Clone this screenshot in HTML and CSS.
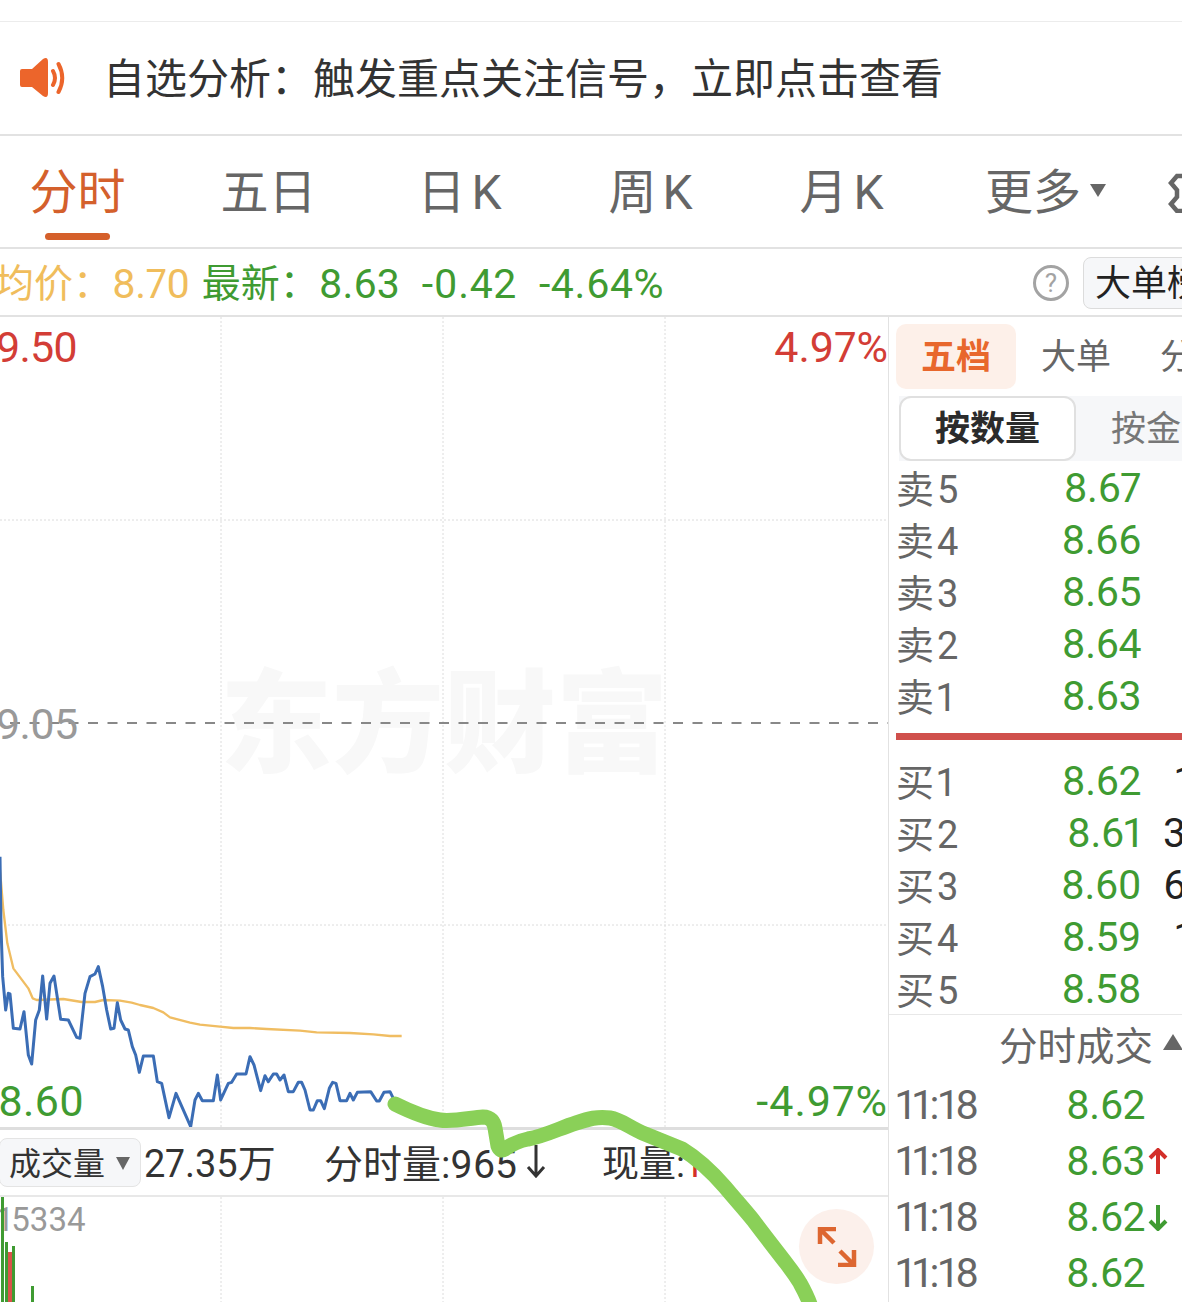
FILE: index.html
```html
<!DOCTYPE html>
<html lang="zh-CN">
<head>
<meta charset="utf-8">
<title>分时</title>
<link rel="stylesheet" href="styles.css">
</head>
<body>
<div class="page">
  <div class="topgap"></div>
  <div class="notice">
    <svg class="speaker" width="48" height="42" viewBox="19 57 48 42"><path class="speaker-body" d="M22 69H32L43 59Q48 56 48 62V93Q48 99 43 96L32 87H22Q20 87 20 85V71Q20 69 22 69Z"/><path class="speaker-wave" d="M53 71Q57 78 53 85M58.500 64Q66 78 58.500 92"/></svg>
    <span class="notice-text">自选分析：触发重点关注信号，立即点击查看</span>
  </div>
  <nav class="tabs">
    <div class="tab active">分时<i class="tab-line"></i></div>
    <div class="tab">五日</div>
    <div class="tab">日 K</div>
    <div class="tab">周 K</div>
    <div class="tab">月 K</div>
    <div class="tab tab-more">更多<i class="caret"></i></div>
    <svg class="tab-tool" width="20" height="40" viewBox="0 0 20 40"><path d="M20 3H9L3 10L9 17V24L3 31L9 38H20"/></svg>
  </nav>
  <div class="info">
    <div class="quote">
      <span class="avg">均价：</span><span class="avg num">8.70</span>
      <span class="latest">最新：</span><span class="latest num">8.63</span>
      <span class="latest num chg">-0.42</span>
      <span class="latest num chg">-4.64%</span>
    </div>
    <div class="help">?</div>
    <div class="big-btn">大单榜</div>
  </div>
  <div class="main">
    <div class="left">
      <div class="chart">
        <svg class="chart-svg" width="888" height="810" viewBox="0 0 888 810">
          <path class="grid" d="M221 0V810M443 0V810M665 0V810M0 203H888M0 608H888"/>
          <path class="mid" d="M10 406H888"/>
          <g transform="translate(0 533) scale(.33333)">
            <polyline class="avg-line" points="0,60 10,180 22,280 40,355 85,415 98,445 110,450 190,447 245,456 285,456 310,450 360,452 395,458 420,465 460,474 490,487 510,502 570,518 600,524 660,530 700,534 750,534 800,537 900,542 950,547 1050,549 1120,553 1170,558 1205,558"/>
            <polyline class="price-line" points="0,20 3,230 8,380 17,480 25,430 30,432 40,535 60,537 72,485 85,615 95,642 107,510 118,480 128,378 140,507 150,400 162,378 182,508 205,510 230,562 240,565 255,430 270,380 285,372 295,350 308,410 320,480 332,537 342,535 352,458 362,510 375,537 385,540 397,590 407,615 418,667 430,618 460,618 472,695 485,700 507,803 528,730 572,830 585,750 595,730 607,752 640,752 652,675 662,750 685,700 695,697 710,672 738,672 750,620 762,645 782,722 795,677 805,695 820,672 830,672 840,690 852,675 865,725 880,725 895,697 905,697 915,720 930,780 940,780 952,752 962,752 973,776 988,715 998,697 1008,700 1020,752 1040,752 1050,730 1060,750 1072,727 1112,725 1130,753 1138,753 1152,727 1170,725 1180,745"/>
          </g>
        </svg>
        <div class="watermark">东方财富</div>
        <span class="axis axis-tl up">9.50</span>
        <span class="axis axis-ml flat">9.05</span>
        <span class="axis axis-bl down">8.60</span>
        <span class="axis axis-tr up">4.97%</span>
        <span class="axis axis-br down">-4.97%</span>
      </div>
      <div class="subbar">
        <div class="select">成交量<i class="select-caret"></i></div>
        <span class="sub-total">27.35万</span>
        <span class="sub-item">分时量:965<svg class="sub-arrow" width="20" height="34" viewBox="0 0 20 34"><path d="M10 1V32M2 23L10 32L18 23"/></svg></span>
        <span class="sub-now">现量:<b class="sub-red">1</b></span>
      </div>
      <div class="volume">
        <svg class="volume-svg" width="888" height="105" viewBox="0 0 888 105">
          <path class="grid" d="M221 0V105M443 0V105M665 0V105"/>
        </svg>
        <span class="vol-max">15334</span>
        <div class="bars">
          <i class="bar bar-g bar-a"></i><i class="bar bar-g bar-b"></i><i class="bar bar-r bar-c"></i><i class="bar bar-g bar-d"></i><i class="bar bar-g bar-e"></i>
        </div>
        <button class="expand">
          <svg width="40" height="40" viewBox="0 0 40 40"><path d="M3 17V2H19M3 2L17 16M37 23V38H21M37 38L23 24"/></svg>
        </button>
      </div>
    </div>
    <aside class="panel">
      <div class="ptabs">
        <div class="ptab active">五档</div>
        <div class="ptab">大单</div>
        <div class="ptab">分价</div>
      </div>
      <div class="toggle">
        <div class="toggle-on">按数量</div>
        <div class="toggle-off">按金额</div>
      </div>
      <div class="book">
        <div class="row"><span class="lab">卖5</span><span class="price">8.67</span></div>
        <div class="row"><span class="lab">卖4</span><span class="price">8.66</span></div>
        <div class="row"><span class="lab">卖3</span><span class="price">8.65</span></div>
        <div class="row"><span class="lab">卖2</span><span class="price">8.64</span></div>
        <div class="row"><span class="lab">卖1</span><span class="price">8.63</span></div>
      </div>
      <div class="redbar"></div>
      <div class="book buy">
        <div class="row"><span class="lab">买1</span><span class="price">8.62</span><span class="qty short">1</span></div>
        <div class="row"><span class="lab">买2</span><span class="price">8.61</span><span class="qty">3</span></div>
        <div class="row"><span class="lab">买3</span><span class="price">8.60</span><span class="qty">6</span></div>
        <div class="row"><span class="lab">买4</span><span class="price">8.59</span><span class="qty short">1</span></div>
        <div class="row"><span class="lab">买5</span><span class="price">8.58</span></div>
      </div>
      <div class="trade-head">分时成交<i class="head-caret"></i></div>
      <div class="trades">
        <div class="trade"><span class="time">11:18</span><span class="tprice">8.62</span></div>
        <div class="trade"><span class="time">11:18</span><span class="tprice">8.63</span><svg class="dir dir-up" width="20" height="27" viewBox="0 0 20 27"><path d="M10 26V2M2 10L10 2L18 10"/></svg></div>
        <div class="trade"><span class="time">11:18</span><span class="tprice">8.62</span><svg class="dir dir-down" width="20" height="27" viewBox="0 0 20 27"><path d="M10 1V25M2 17L10 25L18 17"/></svg></div>
        <div class="trade"><span class="time">11:18</span><span class="tprice">8.62</span></div>
      </div>
    </aside>
  </div>
  <svg class="scribble" width="1182" height="1302" viewBox="0 0 1182 1302"><path d="M395 1104C405 1109 425 1118 440 1120C452 1122 470 1118 483 1117C491 1117 494 1122 495 1128L498 1146Q500 1152 505 1149C512 1144 518 1141 528 1139C545 1136 560 1128 576 1123C588 1119 598 1116 610 1118C622 1120 630 1128 645 1134C660 1140 672 1145 682 1149C700 1160 712 1172 725 1187C735 1199 745 1210 753 1220C765 1236 776 1250 786 1263C793 1272 797 1278 800 1283C805 1292 809 1300 812 1310"/></svg>
</div>
</body>
</html>
```
FILE: styles.css
```css
* { box-sizing: border-box; }
html, body { margin: 0; padding: 0; background: #fff; }
body {
  font-family: Roboto, "Noto Sans CJK SC", sans-serif;
  font-variant-numeric: proportional-nums;
  color: #333;
}
i { display: block; }
.page {
  position: relative;
  width: 1182px;
  height: 1302px;
  overflow: hidden;
  display: flex;
  flex-direction: column;
}
.topgap { height: 22px; flex: none; border-bottom: 1px solid #ececec; }

.notice {
  height: 114px;
  flex: none;
  display: flex;
  align-items: center;
  padding-left: 19px;
  border-bottom: 2px solid #e2e2e2;
}
.speaker { flex: none; margin-top: -1px; }
.speaker-body { fill: #ec652b; }
.speaker-wave { fill: none; stroke: #ec652b; stroke-width: 4; stroke-linecap: round; }
.notice-text { margin-left: 36px; margin-top: 4px; font-size: 42px; line-height: 50px; white-space: nowrap; color: #333; }

.tabs {
  height: 113px;
  flex: none;
  display: flex;
  align-items: center;
  margin-left: -18px;
  width: 1200px;
  padding-top: 2px;
  border-bottom: 2px solid #e2e2e2;
  overflow: hidden;
}
.tab {
  position: relative;
  width: 191px;
  flex: none;
  display: flex;
  justify-content: center;
  align-items: center;
  font-size: 48px;
  line-height: 60px;
  word-spacing: -6px;
  color: #666;
  white-space: nowrap;
}
.tab.active { color: #d4602c; }
.tab-more { padding-left: 26px; }
.tab-line {
  position: absolute;
  left: 63px;
  top: 70px;
  width: 65px;
  height: 7px;
  border-radius: 4px;
  background: #d5602b;
}
.caret {
  margin-left: 9px;
  margin-top: -4px;
  width: 0;
  height: 0;
  border-left: 8px solid transparent;
  border-right: 8px solid transparent;
  border-top: 13px solid #666;
}
.tab-tool { flex: none; margin-left: 40px; }
.tab-tool path { fill: none; stroke: #666; stroke-width: 4.500; }

.info {
  height: 68px;
  flex: none;
  display: flex;
  align-items: center;
  padding-top: 2px;
  border-bottom: 2px solid #e2e2e2;
  overflow: hidden;
  width: 1182px;
}
.quote { display: flex; align-items: center; margin-left: -5px; margin-top: 2px; font-size: 39px; line-height: 50px; white-space: nowrap; width: 1038px; flex: none; }
.avg { color: #f0bd5c; }
.latest { color: #3f9b32; }
.num { font-size: 41px; }
.avg.num { margin-right: 12px; letter-spacing: -.5px; }
.chg { margin-left: 22px; letter-spacing: .6px; }
.help {
  flex: none;
  width: 36px;
  height: 36px;
  border: 3px solid #a3a3a3;
  border-radius: 50%;
  text-align: center;
  font-size: 26px;
  line-height: 30px;
  color: #a3a3a3;
}
.big-btn {
  flex: none;
  margin-left: 14px;
  height: 52px;
  width: 160px;
  padding-left: 11px;
  background: #f6f7f9;
  border: 1px solid #dcdcdc;
  border-radius: 8px;
  font-size: 36px;
  line-height: 52px;
  color: #222;
  white-space: nowrap;
}

.main { flex: 1; min-height: 0; display: flex; }
.left { width: 888px; flex: none; display: flex; flex-direction: column; }
.chart { position: relative; height: 810px; flex: none; overflow: hidden; }
.chart-svg { display: block; position: absolute; left: 0; top: 0; z-index: 1; }
.grid { fill: none; stroke: #dcdcdc; stroke-width: 1; stroke-dasharray: 2 2; }
.mid { fill: none; stroke: #888; stroke-width: 2; stroke-dasharray: 10 9.500; }
.avg-line { fill: none; stroke: #f0bd62; stroke-width: 7; stroke-linejoin: round; }
.price-line { fill: none; stroke: #3b6db5; stroke-width: 9; stroke-linejoin: round; }
.watermark {
  position: absolute;
  left: 220px;
  top: 344px;
  font-size: 112px;
  line-height: 130px;
  font-weight: 900;
  color: #f8f8f8;
  white-space: nowrap;
}
.axis { position: absolute; z-index: 2; font-size: 43px; line-height: 50px; white-space: nowrap; }
.up { color: #d33d36; }
.down { color: #3f9b32; }
.flat { color: #999; }
.axis-tl { left: -4px; top: 5px; letter-spacing: -1px; }
.axis-ml { left: -4px; top: 382px; letter-spacing: -1px; }
.axis-bl { left: -2px; top: 759px; }
.axis-tr { right: 0; top: 5px; }
.axis-br { right: 0; top: 759px; letter-spacing: 1px; }

.subbar {
  height: 70px;
  flex: none;
  display: flex;
  align-items: center;
  padding-bottom: 4px;
  border-top: 3px solid #dedede;
  border-bottom: 2px solid #e8e8e8;
  white-space: nowrap;
  overflow: hidden;
  font-size: 38px;
  color: #333;
}
.select {
  flex: none;
  width: 142px;
  height: 49px;
  margin-left: -1px;
  margin-top: 4px;
  padding-left: 9px;
  padding-bottom: 4px;
  display: flex;
  align-items: center;
  background: #f6f7f9;
  border: 1px solid #e4e4e4;
  border-radius: 8px;
  font-size: 32px;
}
.select-caret {
  margin-left: 11px;
  margin-top: 6px;
  width: 0;
  height: 0;
  border-left: 7px solid transparent;
  border-right: 7px solid transparent;
  border-top: 13px solid #666;
}
.sub-total { margin-left: 3px; width: 180px; flex: none; }
.sub-item { width: 278px; flex: none; display: flex; align-items: center; font-size: 39px; }
.sub-arrow { margin-left: 9px; }
.sub-arrow path { fill: none; stroke: #333; stroke-width: 3; }
.sub-now { font-size: 37px; }
.sub-red { color: #d32f2a; font-weight: 400; }

.volume { position: relative; flex: 1; min-height: 0; overflow: hidden; }
.volume-svg { position: absolute; left: 0; top: 0; display: block; }
.vol-max { position: absolute; left: -3px; top: 3px; font-size: 33px; line-height: 40px; color: #999; white-space: nowrap; }
.bars { position: absolute; inset: 0; }
.bar { position: absolute; bottom: 0; width: 3px; }
.bar-g { background: #3f9b32; }
.bar-r { background: #d9534a; }
.bar-a { left: 1px; top: 0; }
.bar-b { left: 5px; top: 45px; }
.bar-c { left: 8px; top: 55px; width: 4px; }
.bar-d { left: 12px; top: 49px; }
.bar-e { left: 31px; top: 89px; }
.expand {
  position: absolute;
  left: 799px;
  top: 12px;
  width: 75px;
  height: 75px;
  padding: 0;
  border: 0;
  border-radius: 50%;
  background: #fcf0eb;
  display: flex;
  align-items: center;
  justify-content: center;
}
.expand path { fill: none; stroke: #dd6630; stroke-width: 4.500; }

.panel {
  flex: 1;
  min-width: 0;
  border-left: 1px solid #e2e2e2;
  overflow: hidden;
  display: flex;
  flex-direction: column;
  margin-top: -1px;
  padding-top: 8px;
}
.ptabs { display: flex; height: 65px; flex: none; margin-left: 7px; color: #666; font-size: 35px; white-space: nowrap; }
.ptab { width: 144px; flex: none; height: 65px; line-height: 67px; text-align: center; padding-right: 24px; }
.ptab:last-child { margin-left: -24px; padding-left: 24px; padding-right: 0; text-align: left; }
.ptab.active { width: 120px; padding: 0; margin-right: 0; background: #fdf0e9; border-radius: 10px; color: #e8672c; font-weight: 700; }
.ptab.active + .ptab { width: 144px; padding-left: 0; text-align: center; }
.toggle { margin: 7px 0 0 10px; display: flex; height: 65px; flex: none; background: #f6f7f9; white-space: nowrap; font-size: 35px; }
.toggle-on { width: 177px; flex: none; border: 2px solid #e0e0e0; border-radius: 12px; background: #fff; font-weight: 700; text-align: center; line-height: 64px; color: #2b2b2b; }
.toggle-off { margin-left: 35px; line-height: 67px; color: #777; }

.book { flex: none; padding-left: 7px; }
.row { display: flex; align-items: center; height: 52px; white-space: nowrap; }
.lab { width: 245px; flex: none; margin-top: -2px; font-size: 38px; letter-spacing: 3px; color: #666; text-align: left; }
.price { margin-left: -245px; margin-top: 2px; width: 245px; flex: none; text-align: right; font-size: 41px; letter-spacing: -.5px; color: #3f9b32; }
.qty { margin-left: 22px; margin-top: 2px; font-size: 41px; color: #222; }
.qty.short { margin-left: 34px; }
.redbar { flex: none; height: 7px; margin: 12px 0 14px 7px; background: #d0504c; }
.trade-head {
  flex: none;
  height: 62px;
  padding-bottom: 6px;
  border-top: 1px solid #e8e8e8;
  display: flex;
  align-items: center;
  padding-left: 110px;
  font-size: 38.500px;
  color: #666;
  white-space: nowrap;
}
.head-caret {
  margin-left: 10px;
  margin-top: -2px;
  flex: none;
  width: 0;
  height: 0;
  border-left: 10px solid transparent;
  border-right: 10px solid transparent;
  border-bottom: 16px solid #666;
}
.trades { margin-top: 1px; }
.trade { display: flex; align-items: center; height: 56px; padding-left: 7px; white-space: nowrap; }
.time { width: 170px; flex: none; font-size: 41px; letter-spacing: -1px; color: #666; }
.tprice { width: 78px; flex: none; text-align: right; font-size: 41px; letter-spacing: -.5px; color: #3f9b32; }
.dir { flex: none; margin-left: 4px; }
.dir path { fill: none; stroke-width: 4; }
.dir-up path { stroke: #d32f2a; }
.dir-down path { stroke: #3f9b32; }

.scribble { position: absolute; left: 0; top: 0; z-index: 5; pointer-events: none; }
.scribble path { fill: none; stroke: #8ad058; stroke-width: 15; stroke-linecap: round; stroke-linejoin: round; }
```
